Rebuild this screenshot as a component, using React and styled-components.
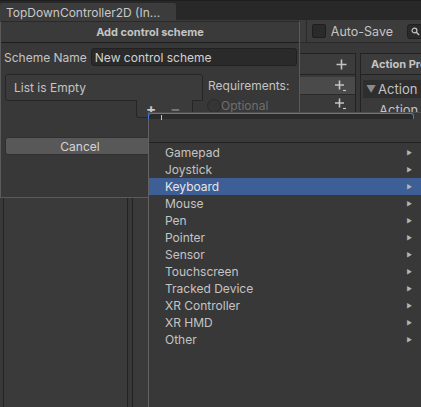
import React from "react";
import styled, { createGlobalStyle } from "styled-components";

const GlobalStyle = createGlobalStyle`
  html, body {
    margin: 0;
    padding: 0;
    background: #191919;
  }
  body {
    font-family: Inter, "Noto Sans", "Liberation Sans", sans-serif;
    font-size: 12px;
    color: #c4c4c4;
  }
`;

const devices = [
  "Gamepad",
  "Joystick",
  "Keyboard",
  "Mouse",
  "Pen",
  "Pointer",
  "Sensor",
  "Touchscreen",
  "Tracked Device",
  "XR Controller",
  "XR HMD",
  "Other",
];

function PlusMore() {
  return (
    <svg width="12" height="12" viewBox="0 0 12 12">
      <path d="M4.5 0.5v9M0 5h9" stroke="#c4c4c4" strokeWidth="1.6" />
      <path d="M8 10.5h3" stroke="#c4c4c4" strokeWidth="1.2" />
    </svg>
  );
}

function Plus() {
  return (
    <svg width="11" height="11" viewBox="0 0 11 11">
      <path d="M5.5 0.5v10M0.5 5.5h10" stroke="#c4c4c4" strokeWidth="1.6" />
    </svg>
  );
}

export default function App() {
  return (
    <>
      <GlobalStyle />
      <Page>
        <TopBar>
          <Tab>TopDownController2D (In...</Tab>
        </TopBar>
        <EditorWindow>
          <Toolbar>
            <GreyText>et</GreyText>
            <ToolSep />
            <CheckBox />
            <span>Auto-Save</span>
            <SearchBox>
              <svg width="9" height="9" viewBox="0 0 9 9">
                <circle cx="3.5" cy="3.5" r="2.4" stroke="#c4c4c4" strokeWidth="1.2" fill="none" />
                <path d="M5.3 5.3l2.8 2.8" stroke="#c4c4c4" strokeWidth="1.4" />
              </svg>
            </SearchBox>
          </Toolbar>
          <Body>
            <MapsPanel />
            <ActionsPanel>
              <PanelHeader $end>
                <Plus />
              </PanelHeader>
              <ActionRow $selected>
                <PlusMore />
              </ActionRow>
              <ActionRow>
                <PlusMore />
              </ActionRow>
            </ActionsPanel>
            <PropsPanel>
              <PanelHeader>
                <BoldText>Action Properties</BoldText>
              </PanelHeader>
              <FoldRow>
                <Fold>▼</Fold>
                <span>Action</span>
              </FoldRow>
              <PropLine>Action Type</PropLine>
            </PropsPanel>
          </Body>
        </EditorWindow>

        <Dialog>
          <DialogTitle>Add control scheme</DialogTitle>
          <FieldRow>
            <span>Scheme Name</span>
            <TextField>New control scheme</TextField>
          </FieldRow>
          <ListArea>
            <ListColumn>
              <ListBox>List is Empty</ListBox>
              <ListFooter>
                <FooterGlyph>+</FooterGlyph>
                <FooterGlyph $dim>−</FooterGlyph>
              </ListFooter>
            </ListColumn>
            <Requirements>
              <span>Requirements:</span>
              <RadioLine>
                <Radio />
                <GreyText>Optional</GreyText>
              </RadioLine>
            </Requirements>
          </ListArea>
          <ButtonRow>
            <Button>Cancel</Button>
          </ButtonRow>
        </Dialog>

        <Dropdown>
          <SearchStrip>
            <Caret />
          </SearchStrip>
          <DropHeader />
          <ItemList>
            {devices.map((d) => (
              <Item key={d} $active={d === "Keyboard"}>
                <span>{d}</span>
                <Arrow>▶</Arrow>
              </Item>
            ))}
          </ItemList>
        </Dropdown>
      </Page>
    </>
  );
}

const Page = styled.div`
  position: relative;
  width: 421px;
  height: 407px;
  overflow: hidden;
  display: flex;
  flex-direction: column;
  background: #282828;
`;

const TopBar = styled.div`
  height: 20px;
  padding-top: 2px;
  display: flex;
  background: #282828;
  border-top: 1px solid #1e1e1e;
  box-sizing: border-box;
`;

const Tab = styled.div`
  width: 176px;
  background: #3c3c3c;
  padding: 2px 0 0 6px;
  box-sizing: border-box;
  font-size: 12px;
  color: #c8c8c8;
  border-radius: 2px 2px 0 0;
`;

const EditorWindow = styled.div`
  flex: 1;
  display: flex;
  flex-direction: column;
  background: #383838;
`;

const Toolbar = styled.div`
  height: 22px;
  display: flex;
  align-items: center;
  justify-content: flex-end;
  gap: 5px;
  background: #3c3c3c;
  border-bottom: 1px solid #2a2a2a;
  font-size: 12.5px;
`;

const GreyText = styled.span`
  color: #6e6e6e;
`;

const ToolSep = styled.div`
  width: 1px;
  height: 22px;
  background: #2a2a2a;
  margin: 0 0 0 5px;
`;

const CheckBox = styled.div`
  width: 12px;
  height: 12px;
  border: 1px solid #1e1e1e;
  background: #2a2a2a;
  border-radius: 2px;
`;

const SearchBox = styled.div`
  width: 30px;
  height: 13px;
  margin-left: 9px;
  margin-right: -21px;
  background: #2a2a2a;
  border: 1px solid #202020;
  border-radius: 3px;
  display: flex;
  align-items: center;
  padding-left: 3px;
`;

const Body = styled.div`
  flex: 1;
  display: flex;
  padding: 10px 0 0 3px;
  gap: 4px;
  min-width: 0;
`;

const MapsPanel = styled.div`
  flex: 0 0 123px;
  border-left: 1px solid #232323;
  border-right: 1px solid #232323;
  background: #3a3a3a;
`;

const ActionsPanel = styled.div`
  flex: 0 0 222px;
  border-left: 1px solid #232323;
  border-right: 1px solid #232323;
  background: #3a3a3a;
  display: flex;
  flex-direction: column;
`;

const PropsPanel = styled.div`
  flex: 0 0 80px;
  border-left: 1px solid #232323;
  background: #3a3a3a;
  display: flex;
  flex-direction: column;
  overflow: hidden;
`;

const PanelHeader = styled.div`
  height: 20px;
  display: flex;
  align-items: center;
  justify-content: ${(p) => (p.$end ? "flex-end" : "flex-start")};
  padding: 0 8px 0 10px;
  border-top: 1px solid #232323;
  border-bottom: 1px solid #232323;
  background: #3c3c3c;
  margin-bottom: 1px;
`;

const BoldText = styled.span`
  font-weight: 700;
  font-size: 11px;
  white-space: nowrap;
`;

const ActionRow = styled.div`
  height: 17px;
  display: flex;
  align-items: center;
  justify-content: flex-end;
  padding-right: 8px;
  background: ${(p) => (p.$selected ? "#4a4a4a" : "#3a3a3a")};
  border-bottom: 1px solid #2a2a2a;
  margin-top: ${(p) => (p.$selected ? "1px" : "0")};
`;

const FoldRow = styled.div`
  height: 18px;
  margin: 4px 0 0 2px;
  display: flex;
  align-items: center;
  gap: 2px;
  padding-left: 3px;
  background: #2e2e2e;
  font-size: 13px;
  white-space: nowrap;
`;

const Fold = styled.span`
  font-size: 10px;
  color: #8a8a8a;
`;

const PropLine = styled.div`
  margin: 4px 0 0 18px;
  white-space: nowrap;
  font-size: 13px;
`;

const Dialog = styled.div`
  position: absolute;
  left: 0;
  top: 21px;
  width: 300px;
  height: 177px;
  box-sizing: border-box;
  background: #383838;
  border: 1px solid #5a5a5a;
  border-top-color: #2a2a2a;
  display: flex;
  flex-direction: column;
`;

const DialogTitle = styled.div`
  height: 20px;
  display: flex;
  align-items: center;
  justify-content: center;
  font-size: 11px;
  font-weight: 700;
  color: #c4c4c4;
  background: #3a3a3a;
  border-bottom: 1px solid #1e1e1e;
`;

const FieldRow = styled.div`
  display: flex;
  align-items: center;
  gap: 4px;
  padding: 5px 2px 0 3px;
  font-size: 12px;
`;

const TextField = styled.div`
  flex: 1;
  height: 18px;
  box-sizing: border-box;
  background: #2a2a2a;
  border: 1px solid #212121;
  border-radius: 3px;
  padding: 1px 3px;
  font-size: 12px;
  color: #d2d2d2;
`;

const ListArea = styled.div`
  display: flex;
  gap: 5px;
  padding: 8px 0 0 4px;
`;

const ListColumn = styled.div`
  width: 198px;
  display: flex;
  flex-direction: column;
  align-items: flex-end;
`;

const ListBox = styled.div`
  width: 100%;
  height: 27px;
  box-sizing: border-box;
  border: 1px solid #262626;
  border-radius: 3px 3px 0 3px;
  background: #3b3b3b;
  padding: 5px 0 0 8px;
  font-size: 12px;
`;

const ListFooter = styled.div`
  width: 57px;
  height: 18px;
  margin-right: 10px;
  margin-top: -1px;
  box-sizing: border-box;
  border: 1px solid #262626;
  border-top: none;
  border-radius: 0 0 3px 3px;
  background: #3b3b3b;
  display: flex;
  align-items: center;
  gap: 14px;
  padding-left: 9px;
`;

const FooterGlyph = styled.span`
  font-size: 15px;
  font-weight: 700;
  line-height: 1;
  color: ${(p) => (p.$dim ? "#777" : "#c8c8c8")};
`;

const Requirements = styled.div`
  display: flex;
  flex-direction: column;
  gap: 5px;
  padding-top: 4px;
  font-size: 12px;
`;

const RadioLine = styled.div`
  display: flex;
  align-items: center;
  margin-left: -1px;
`;

const Radio = styled.div`
  width: 12px;
  height: 12px;
  border-radius: 50%;
  background: #353535;
  border: 1px solid #2a2a2a;
`;

const ButtonRow = styled.div`
  padding: 19px 0 0 4px;
`;

const Button = styled.div`
  width: 150px;
  height: 18px;
  box-sizing: border-box;
  display: flex;
  align-items: center;
  justify-content: center;
  background: #585858;
  border: 1px solid #303030;
  border-radius: 3px;
  font-size: 12px;
  color: #d4d4d4;
`;

const Dropdown = styled.div`
  position: absolute;
  left: 148px;
  top: 112px;
  right: 0;
  bottom: 0;
  background: #383838;
  border-left: 1px solid #626262;
  border-top: 1px solid #4d4d4d;
  display: flex;
  flex-direction: column;
`;

const SearchStrip = styled.div`
  height: 5px;
  margin-right: 7px;
  margin-left: -1px;
  background: #2a2a2a;
  border: 1px solid #3d7be0;
  border-bottom: none;
  border-radius: 3px 3px 0 0;
  position: relative;
`;

const Caret = styled.div`
  position: absolute;
  left: 12px;
  top: 1px;
  width: 1px;
  height: 5px;
  background: #c4c4c4;
`;

const DropHeader = styled.div`
  height: 23px;
  background: #393939;
  border-bottom: 1px solid #222;
`;

const ItemList = styled.div`
  padding-top: 1px;
`;

const Item = styled.div`
  height: 17px;
  display: flex;
  align-items: center;
  justify-content: space-between;
  padding: 0 9px 0 16px;
  font-size: 12px;
  color: ${(p) => (p.$active ? "#e6e6e6" : "#c4c4c4")};
  background: ${(p) => (p.$active ? "#3e5f96" : "transparent")};
`;

const Arrow = styled.span`
  font-size: 6px;
  color: #b4b4b4;
`;
